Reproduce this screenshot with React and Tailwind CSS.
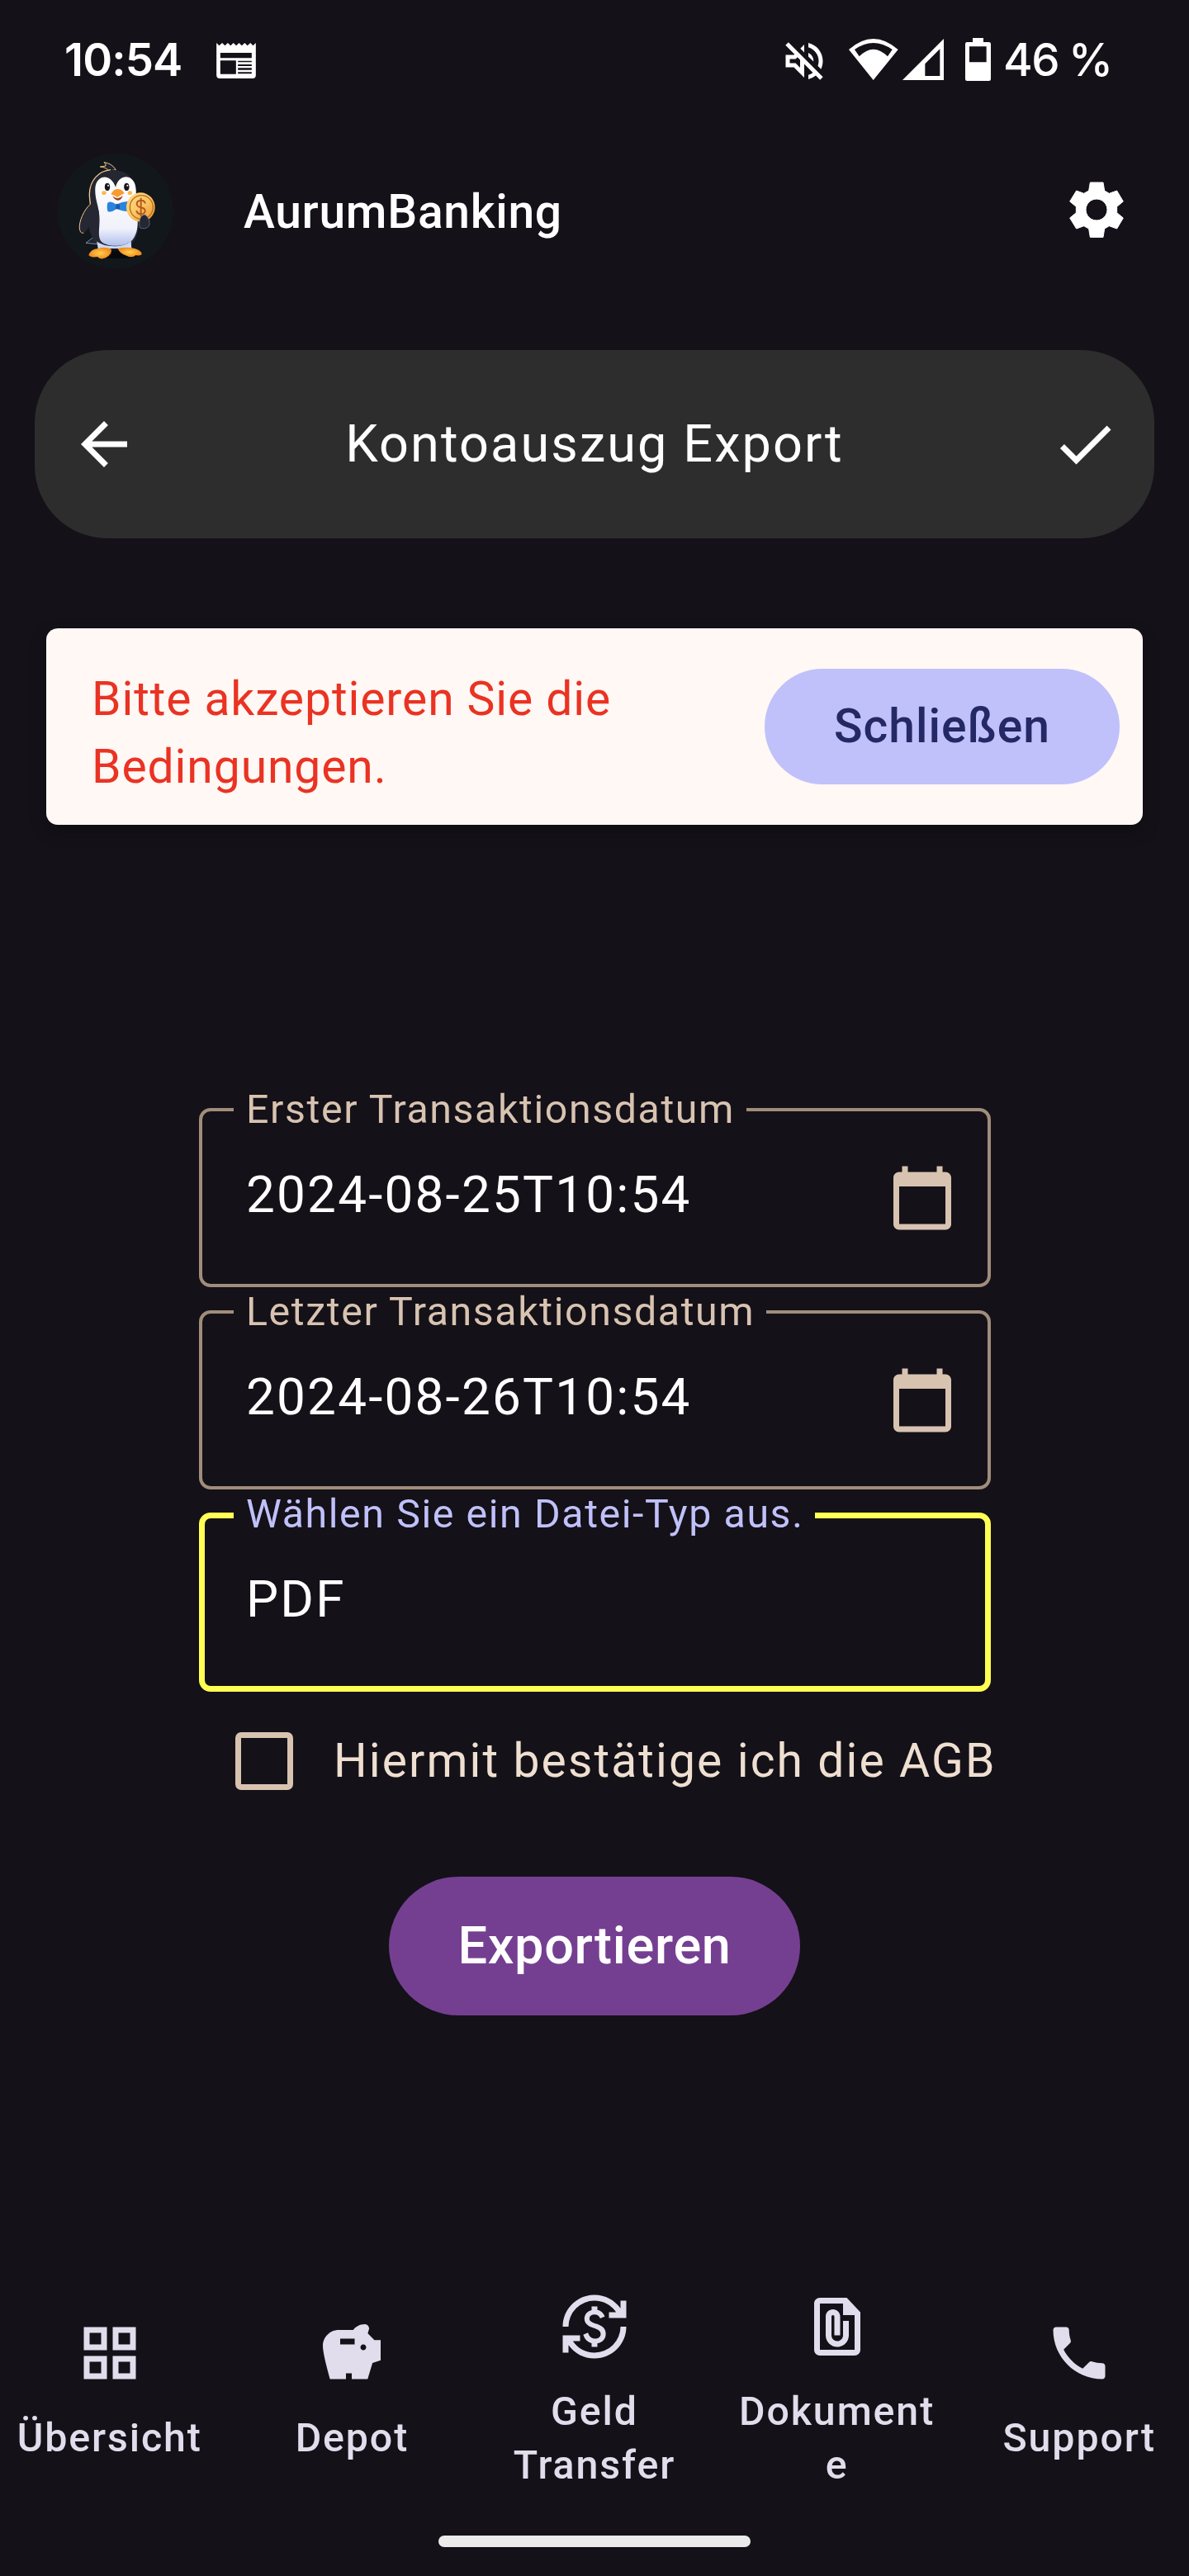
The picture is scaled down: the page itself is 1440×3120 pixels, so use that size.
import React from "react";
import { MdCurrencyExchange, MdOutlineVolumeOff, MdPhone, MdSavings } from "react-icons/md";

function NewspaperIcon() {
  return (
    <svg width="48" height="43" viewBox="787 155 143 129" fill="#fff">
      <path
        fillRule="evenodd"
        d="M787 155l10 10 10.500-10 10.500 10 10-10 10.500 10 10-10 10.500 10 10-10 10 10 10.500-10 10 10 10.500-10 10 10 10-10V272q0 12-12 12H799q-12 0-12-12zM801 191v19h114v-19zM801 219v49h57v-49zM865 220v5h50v-5zM865 233v6h50v-6zM865 246v7h50v-7zM865 261v6h50v-6z"
      />
    </svg>
  );
}

function WifiIcon() {
  return (
    <svg width="60" height="50" viewBox="264 33 180 150" fill="#fff">
      <path fillRule="evenodd" d="M264 72Q353-6 443 72L353 183zM285 72L302 97Q353 45 405 97L422 72Q353 24 285 72z" />
    </svg>
  );
}

function SignalIcon() {
  return (
    <svg width="50" height="50" viewBox="459 33 150 150" fill="#fff">
      <path fillRule="evenodd" d="M459 183L609 33V183zM541 124V168H595V70z" />
    </svg>
  );
}

function BatteryIcon() {
  return (
    <svg width="31" height="52" viewBox="687 29 93 156" fill="#fff">
      <path
        fillRule="evenodd"
        d="M714 29H753V44H773Q780 44 780 51V178Q780 185 773 185H694Q687 185 687 178V51Q687 44 694 44H714zM702 60V117H764V60z"
      />
    </svg>
  );
}

function GearIcon() {
  return (
    <svg width="96" height="96" viewBox="0 0 288 288" fill="#fff" stroke="#fff" strokeWidth="3" strokeLinejoin="round">
      <path
        fillRule="evenodd"
        d="M121 39H168L173 69 190 79 218 69 241 108 218 127V149L241 168 218 207 190 197 173 207 168 238H121L116 207 98 197 71 207 47 168 70 149V127L47 108 71 69 98 79 116 69zM144 99a39 39 0 1 0 .1 0z"
      />
    </svg>
  );
}

function PenguinLogo() {
  return (
    <svg width="140" height="140" viewBox="30 33 420 420">
      <defs>
        <linearGradient id="belly" x1="0" y1="0" x2="0" y2="1">
          <stop offset="0" stopColor="#fff" />
          <stop offset="0.75" stopColor="#f1f1fb" />
          <stop offset="1" stopColor="#aebfec" />
        </linearGradient>
        <linearGradient id="coin" x1="0" y1="0" x2="1" y2="1">
          <stop offset="0" stopColor="#ffdc8a" />
          <stop offset="0.5" stopColor="#fbc763" />
          <stop offset="1" stopColor="#e8912a" />
        </linearGradient>
        <radialGradient id="foot">
          <stop offset="0" stopColor="#ffd04f" />
          <stop offset="1" stopColor="#f08a1d" />
        </radialGradient>
      </defs>
      <circle cx="240" cy="243" r="210" fill="#12171b" />
      <ellipse cx="245" cy="400" rx="90" ry="14" fill="#08090c" />
      <path d="M132 358L158 338 174 362z" fill="#20222d" stroke="#9fc4ef" strokeWidth="2" />
      <path d="M216 96Q204 82 184 81L204 78Q206 70 198 65Q226 68 241 92z" fill="#20222d" stroke="#f3c98a" strokeWidth="3" />
      <path
        d="M228 92C180 94 146 128 145 180C145 205 150 215 146 238C136 280 140 330 176 364H296C330 330 326 280 318 240C312 210 320 180 310 146C298 110 268 92 228 92z"
        fill="#252732"
      />
      <path d="M222 92C180 96 146 128 145 180C145 200 148 208 148 218" fill="none" stroke="#f3c98a" strokeWidth="4" />
      <path
        d="M166 158C170 110 222 102 240 155C252 104 306 106 313 155C318 190 308 215 315 240C322 270 326 318 300 348C270 376 206 374 186 350C172 330 186 290 180 250C176 215 164 195 166 158z"
        fill="url(#belly)"
      />
      <path d="M172 352C200 376 270 376 296 350L298 378H176z" fill="#ccd9f8" />
      <path d="M147 218C125 238 106 280 109 306C112 326 124 324 132 314C154 290 176 268 179 244C176 230 160 218 147 218z" fill="#252732" />
      <path d="M147 218C125 238 106 280 109 306C111 320 118 324 124 321" fill="none" stroke="#f3c98a" strokeWidth="3" />
      <ellipse cx="210" cy="154" rx="9.500" ry="14" fill="#16181f" />
      <ellipse cx="280" cy="154" rx="9.500" ry="14" fill="#16181f" />
      <circle cx="213" cy="149" r="3" fill="#fff" />
      <circle cx="283" cy="149" r="3" fill="#fff" />
      <ellipse cx="198" cy="176" rx="8" ry="7" fill="#ffb648" />
      <ellipse cx="292" cy="176" rx="8" ry="7" fill="#ffb648" />
      <path d="M229 186Q246 206 266 186Q262 202 248 203Q234 200 229 186z" fill="#a53a16" />
      <path d="M223 181Q234 160 247 162Q264 162 272 178Q254 186 247 192Q236 184 223 181z" fill="#f99c2b" />
      <path d="M211 212Q220 202 242 218Q262 208 286 206V244Q262 242 243 234Q222 250 211 242Q207 226 211 212z" fill="#2b83dc" />
      <path d="M242 215l13 3v16l-15 1z" fill="#155cab" />
      <ellipse cx="331" cy="228" rx="52" ry="53" fill="url(#coin)" />
      <ellipse cx="334" cy="228" rx="42" ry="43" fill="none" stroke="#b86a1f" strokeWidth="4" />
      <path d="M348 214Q344 202 332 203Q317 204 317 216Q318 226 332 229Q348 232 347 243Q344 254 331 253Q318 252 316 240M332 194V262" fill="none" stroke="#b55b20" strokeWidth="6" />
      <path d="M328 302C322 282 330 254 346 255C360 262 366 282 362 294C356 306 340 308 328 302z" fill="#252732" stroke="#8da0c4" strokeWidth="1.500" />
      <path d="M142 402Q150 380 176 378Q200 370 224 380Q230 396 204 412Q184 420 174 408Q150 412 142 402z" fill="url(#foot)" />
      <path d="M248 378Q280 370 310 378Q336 386 335 400Q326 406 314 402Q300 414 280 404Q256 398 248 378z" fill="url(#foot)" />
    </svg>
  );
}

function BackIcon() {
  return (
    <svg width="84" height="84" viewBox="0 0 24 24" fill="#fff">
      <path d="M20 11H7.830l5.590-5.590L12 4l-8 8 8 8 1.410-1.410L7.830 13H20v-2z" />
    </svg>
  );
}

function CheckIcon() {
  return (
    <svg width="84" height="84" viewBox="0 0 24 24" fill="#fff">
      <path d="M9 16.170L4.830 12l-1.420 1.410L9 19 21 7l-1.410-1.410z" />
    </svg>
  );
}

function CalendarIcon() {
  return (
    <svg width="84" height="84" viewBox="0 0 24 24" fill="#d8c3b1">
      <path d="M20 3h-1V1h-2v2H7V1H5v2H4c-1.100 0-2 .9-2 2v16c0 1.100.9 2 2 2h16c1.100 0 2-.9 2-2V5c0-1.100-.9-2-2-2zm0 18H4V8h16v13z" />
    </svg>
  );
}

function GridIcon() {
  return (
    <svg width="84" height="84" viewBox="0 0 24 24" fill="currentColor">
      <path d="M3 3v8h8V3H3zm6 6H5V5h4v4zM3 13v8h8v-8H3zm6 6H5v-4h4v4zM13 3v8h8V3h-8zm6 6h-4V5h4v4zM13 13v8h8v-8h-8zm6 6h-4v-4h4v4z" />
    </svg>
  );
}

function AttachedFileIcon() {
  return (
    <svg width="84" height="84" viewBox="0 0 24 24" fill="currentColor">
      <path d="M15.300 2H6c-1.100 0-2 .9-2 2v16c0 1.100.9 2 2 2h12c1.100 0 2-.9 2-2V7l-4.700-5zM6 20V4h8v4h4v12H6z" />
      <path d="M16 10v5c0 2.210-1.790 4-4 4s-4-1.790-4-4V8.500C8 7.120 9.120 6 10.500 6S13 7.120 13 8.500V15h-2V8.500c0-.28-.22-.5-.5-.5s-.5.22-.5.5V15c0 1.100.9 2 2 2s2-.9 2-2v-5h2z" />
    </svg>
  );
}

function DateField({ label, value }) {
  return (
    <div className="relative flex h-[217px] items-center justify-between rounded-[14px] border-4 border-[#a08d7b] pr-[37px] pl-[53px]">
      <span className="absolute -top-[28px] left-[38px] bg-[#141118] pr-[14px] pl-[15px] text-[48.3px] leading-[52px] tracking-[1.6px] whitespace-nowrap text-[#d8c3b1]">
        {label}
      </span>
      <span className="pb-[8px] text-[62px] leading-[84px] tracking-[2.2px] text-white">{value}</span>
      <CalendarIcon />
    </div>
  );
}

function NavItem({ icon, lines }) {
  return (
    <button className="flex flex-col items-center gap-7 text-[#e1ddec]">
      {icon}
      <span className="text-center text-[48.3px] leading-[65px] font-medium tracking-[1.9px]">
        {lines.map((line) => (
          <span key={line} className="block">
            {line}
          </span>
        ))}
      </span>
    </button>
  );
}

export default function App() {
  return (
    <div className="flex h-[3120px] w-[1440px] flex-col overflow-hidden bg-[#141118] font-['Roboto',sans-serif]">
      <div className="flex h-[144px] items-center justify-between pr-[98px] pl-[78px] font-['Inter',sans-serif] text-[54.5px] leading-none font-semibold text-white">
        <div className="flex items-center">
          <span className="w-[184px] tracking-[-0.9px]">10:54</span>
          <span className="pt-[3px]">
            <NewspaperIcon />
          </span>
        </div>
        <div className="flex items-center">
          <MdOutlineVolumeOff size={60} className="mt-[3px] mr-[24px]" />
          <WifiIcon />
          <span className="mr-[26px] ml-[5px]">
            <SignalIcon />
          </span>
          <BatteryIcon />
          <span className="ml-[15px] w-[127px] font-medium tracking-[-1.5px] whitespace-nowrap [word-spacing:-1px]">46 %</span>
        </div>
      </div>

      <header className="flex h-[224px] items-center pr-[64px] pl-[70px]">
        <PenguinLogo />
        <h1 className="ml-[85px] flex-1 text-[57px] leading-none font-medium tracking-[0.7px] text-white">AurumBanking</h1>
        <button>
          <GearIcon />
        </button>
      </header>

      <div className="mx-[42px] mt-[56px] flex h-[228px] shrink-0 items-center justify-between rounded-[88px] bg-[#2d2d2d] px-[42px]">
        <button>
          <BackIcon />
        </button>
        <h2 className="text-[63px] leading-[84px] tracking-[2.1px] text-white">Kontoauszug Export</h2>
        <button>
          <CheckIcon />
        </button>
      </div>

      <div className="mx-[56px] mt-[109px] flex h-[238px] shrink-0 items-center justify-between rounded-[14px] bg-[#fff8f4] pr-[28px] pl-[55px] shadow-[0_8px_20px_rgba(0,0,0,0.25)]">
        <p className="w-[720px] pt-[15px] text-[57px] leading-[81.5px] tracking-[0.9px] text-[#ea3323]">
          Bitte akzeptieren Sie die
          <br />
          Bedingungen.
        </p>
        <button className="h-[140px] w-[430px] rounded-full bg-[#c0c1fb] text-[57px] font-medium tracking-[1px] text-[#242865]">
          Schließen
        </button>
      </div>

      <main className="mt-[343px] ml-[241px] flex w-[959px] shrink-0 flex-col gap-7">
        <DateField label="Erster Transaktionsdatum" value="2024-08-25T10:54" />
        <DateField label="Letzter Transaktionsdatum" value="2024-08-26T10:54" />
        <div className="relative flex h-[217px] items-center rounded-[14px] border-[7px] border-[#ffff54] pl-[50px]">
          <span className="absolute -top-[31px] left-[35px] bg-[#141118] pr-[14px] pl-[15px] text-[48.3px] leading-[52px] tracking-[1.6px] whitespace-nowrap text-[#c0c1fb]">
            Wählen Sie ein Datei-Typ aus.
          </span>
          <span className="pb-[8px] text-[62px] leading-[84px] tracking-[2.2px] text-white">PDF</span>
        </div>
      </main>

      <label className="mt-[49px] ml-[285px] flex h-[70px] items-center gap-[49px]">
        <span className="size-[70px] rounded-[7px] border-[7px] border-[#d8c3b1]" />
        <span className="text-[57px] leading-[70px] tracking-[2.1px] whitespace-nowrap text-[#efdfd1]">Hiermit bestätige ich die AGB</span>
      </label>

      <button className="mt-[105px] h-[168px] w-[498px] shrink-0 self-center rounded-full bg-[#753f91] text-[63px] font-medium tracking-[0.7px] text-white">
        Exportieren
      </button>

      <nav className="mt-[315px] grid h-[281px] shrink-0 grid-cols-5 items-center gap-7">
        <NavItem icon={<GridIcon />} lines={["Übersicht"]} />
        <NavItem icon={<MdSavings size={84} />} lines={["Depot"]} />
        <NavItem icon={<MdCurrencyExchange size={84} />} lines={["Geld", "Transfer"]} />
        <NavItem icon={<AttachedFileIcon />} lines={["Dokument", "e"]} />
        <NavItem icon={<MdPhone size={84} />} lines={["Support"]} />
      </nav>

      <div className="mt-[34px] h-[14px] w-[378px] shrink-0 self-center rounded-full bg-[#ebebeb]" />
    </div>
  );
}
